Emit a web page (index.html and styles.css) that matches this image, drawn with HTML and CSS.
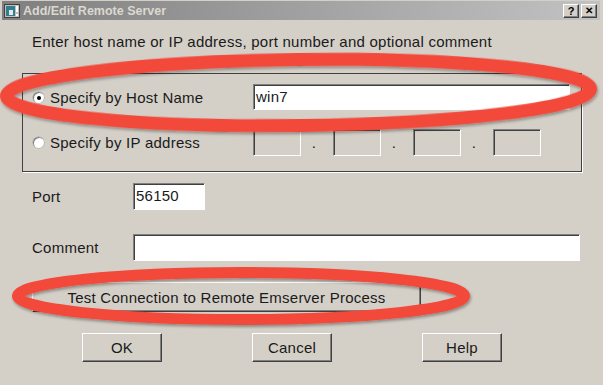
FILE: index.html
```html
<!DOCTYPE html>
<html lang="en">
<head>
    <meta charset="UTF-8">
    <title>Add/Edit Remote Server</title>
    <link rel="stylesheet" href="styles.css">
</head>
<body>
    <div class="window">
        <!-- Title bar -->
        <div class="titlebar">
            <svg class="app-icon" width="16" height="14" viewBox="0 0 16 14">
                <rect x="0.5" y="0.5" width="15" height="13" fill="#c0c0c0" stroke="#404040"/>
                <rect x="2" y="2" width="9" height="10" fill="#2f7f8f"/>
                <rect x="5" y="6" width="4" height="5" fill="#e8e8e8"/>
                <rect x="12" y="2" width="2" height="6" fill="#fff"/>
                <rect x="12" y="10" width="2" height="2" fill="#fff"/>
            </svg>
            <span class="title">Add/Edit Remote Server</span>
            <span class="cap-btn help">?</span>
            <span class="cap-btn close">&#x2715;</span>
        </div>

        <div class="dialog">
            <p class="intro">Enter host name or IP address, port number and optional comment</p>

            <div class="group">
                <div class="row">
                    <label class="choice"><span class="radio checked"></span>Specify by Host Name</label>
                    <div class="field host">win7</div>
                </div>
                <div class="row ip-row">
                    <label class="choice"><span class="radio"></span>Specify by IP address</label>
                    <div class="ip">
                        <span class="field octet"></span><span class="dot">.</span>
                        <span class="field octet"></span><span class="dot">.</span>
                        <span class="field octet"></span><span class="dot">.</span>
                        <span class="field octet"></span>
                    </div>
                </div>
            </div>

            <div class="form-row port-row">
                <span class="caption">Port</span>
                <div class="field port">56150</div>
            </div>
            <div class="form-row comment-row">
                <span class="caption">Comment</span>
                <div class="field comment"></div>
            </div>

            <button class="btn test">Test Connection to Remote Emserver Process</button>

            <div class="actions">
                <button class="btn">OK</button>
                <button class="btn">Cancel</button>
                <button class="btn">Help</button>
            </div>
        </div>

        <!-- Red highlight marks drawn over the dialog -->
        <svg class="marks" width="603" height="385" viewBox="0 0 603 385">
            <defs>
                <filter id="soft" x="-5%" y="-20%" width="110%" height="140%">
                    <feGaussianBlur in="SourceAlpha" stdDeviation="1.5"/>
                    <feOffset dx="1" dy="1.5" result="shadow"/>
                    <feComponentTransfer><feFuncA type="linear" slope="0.35"/></feComponentTransfer>
                    <feMerge><feMergeNode/><feMergeNode in="SourceGraphic"/></feMerge>
                </filter>
            </defs>
            <ellipse class="big" cx="298.5" cy="92.5" rx="292" ry="33" transform="rotate(-0.7 298.5 92.5)" filter="url(#soft)"/>
            <ellipse cx="241" cy="296" rx="223.5" ry="23.5" filter="url(#soft)"/>
        </svg>
    </div>
</body>
</html>
```

FILE: styles.css
```css
body {
    margin: 0;
    padding: 0;
    font-family: "Liberation Sans", Arial, sans-serif;
    font-size: 15px;
    letter-spacing: 0.25px;
    color: #1a1a1a;
    background: #d4d0c8;
}
.window {
    position: relative;
    width: 603px;
    height: 385px;
    background: #d4d0c8;
    overflow: hidden;
}
.titlebar {
    display: flex;
    align-items: center;
    height: 19px;
    margin: 1px 3px 0 2px;
    padding: 0 3px 0 2px;
    background: linear-gradient(to right, #7f7f7f, #c2c2c2);
}
.app-icon {
    margin-right: 3px;
}
.title {
    flex: 1;
    font-size: 12.5px;
    font-weight: bold;
    letter-spacing: 0;
    color: #dcd8d0;
}
.cap-btn {
    width: 14px;
    height: 12px;
    line-height: 12px;
    text-align: center;
    font-size: 11px;
    font-weight: bold;
    letter-spacing: 0;
    color: #000;
    background: #d4d0c8;
    border: 1px solid;
    border-color: #fff #404040 #404040 #fff;
    box-shadow: inset -1px -1px #808080;
}
.cap-btn.help {
    margin-right: 2px;
}
.cap-btn.close {
    font-size: 10px;
}
.dialog {
    display: flex;
    flex-direction: column;
    align-items: flex-start;
}
.intro {
    margin: 13px 0 0 32px;
    line-height: 18px;
}
.group {
    box-sizing: border-box;
    width: 560px;
    margin: 22px 0 0 22px;
    padding: 10px 11px 15px 10px;
    border: 1px solid #404040;
    box-shadow: 1px 1px 0 #fff;
}
.row {
    display: flex;
    align-items: center;
    height: 26px;
}
.ip-row {
    height: 27px;
    margin-top: 19px;
}
.choice {
    display: flex;
    align-items: center;
    width: 220px;
    flex: none;
}
.radio {
    position: relative;
    width: 11px;
    height: 11px;
    margin-right: 6px;
    border-radius: 50%;
    background: #fff;
    box-shadow: inset 1px 1px 0 #808080, 0 0 0 0.5px #a0a0a0;
}
.radio.checked::after {
    content: "";
    position: absolute;
    top: 4px;
    left: 4px;
    width: 4px;
    height: 4px;
    border-radius: 50%;
    background: #000;
}
.field {
    box-sizing: border-box;
    height: 100%;
    padding: 3px 0 0 2px;
    background: #fff;
    border: 1px solid;
    border-color: #808080 #fff #fff #808080;
    box-shadow: inset 1px 1px #404040;
    line-height: 18px;
}
.host {
    width: 317px;
}
.ip {
    display: flex;
    height: 100%;
}
.octet {
    width: 48px;
    background: #d4d0c8;
}
.dot {
    width: 32px;
    padding-right: 6px;
    box-sizing: border-box;
    text-align: center;
    line-height: 27px;
}
.form-row {
    display: flex;
    align-items: center;
    height: 27px;
    margin-left: 32px;
}
.port-row {
    margin-top: 11px;
}
.comment-row {
    margin-top: 24px;
}
.caption {
    width: 101px;
}
.port {
    width: 72px;
}
.comment {
    width: 447px;
}
.btn {
    box-sizing: border-box;
    height: 29px;
    padding: 0;
    font-family: inherit;
    font-size: 15px;
    letter-spacing: 0.25px;
    color: #1a1a1a;
    background: #d4d0c8;
    border: 1px solid;
    border-color: #fff #404040 #404040 #fff;
    box-shadow: inset -1px -1px #808080;
}
.test {
    width: 389px;
    height: 30px;
    margin: 21px 0 0 32px;
}
.actions {
    display: flex;
    gap: 90px;
    margin: 21px 0 0 82px;
}
.actions .btn {
    width: 80px;
}
.marks {
    position: absolute;
    top: 0;
    left: 0;
    pointer-events: none;
}
.marks ellipse {
    fill: none;
    stroke: #f2493a;
    stroke-width: 11;
}
.marks ellipse.big {
    stroke-width: 13;
}
```
